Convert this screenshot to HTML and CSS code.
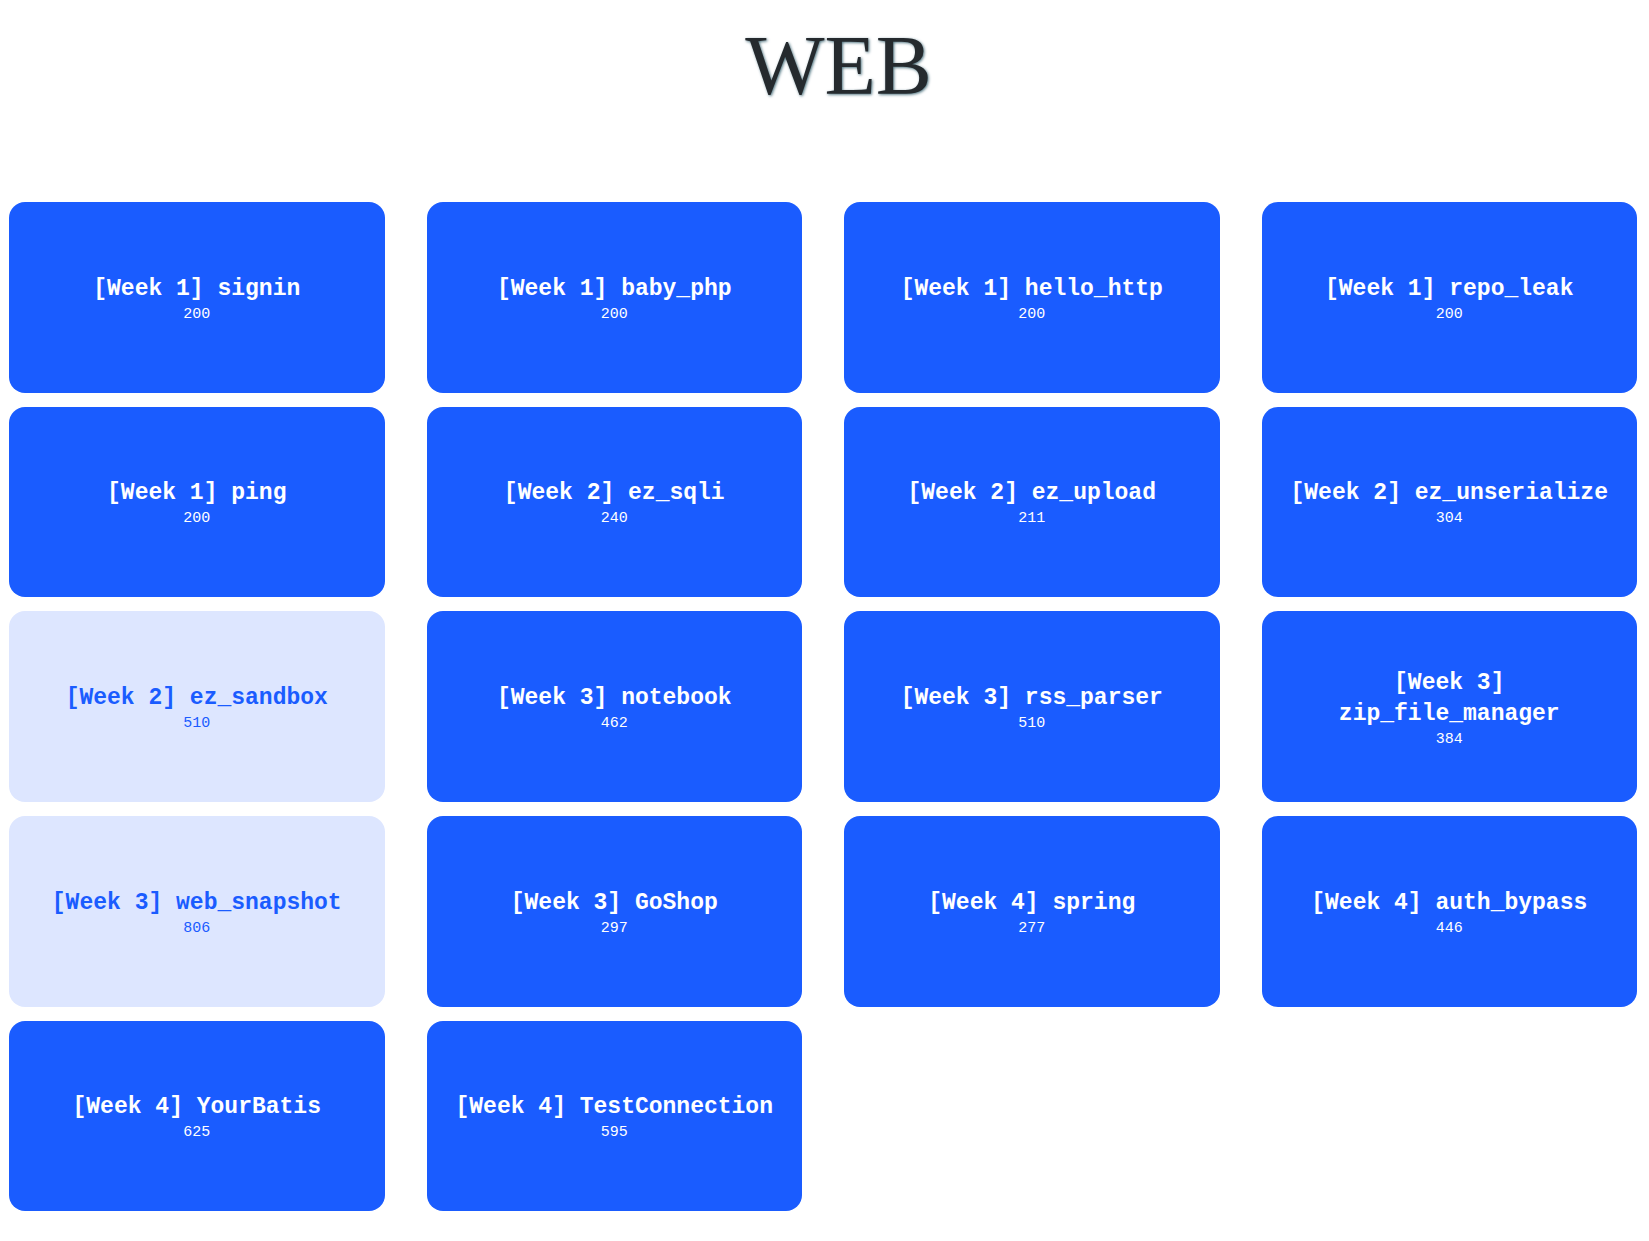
FILE: index.html
```
<!DOCTYPE html>
<html lang="en">
<head>
<meta charset="utf-8">
<meta name="viewport" content="width=device-width, initial-scale=1">
<title>WEB</title>
<link rel="stylesheet" href="styles.css">
</head>
<body>
<header class="category"><h1 class="category-title">WEB</h1></header>
<main class="challenges">
<button class="card" type="button"><span class="name">[Week 1] signin</span><span class="points">200</span></button>
<button class="card" type="button"><span class="name">[Week 1] baby_php</span><span class="points">200</span></button>
<button class="card" type="button"><span class="name">[Week 1] hello_http</span><span class="points">200</span></button>
<button class="card" type="button"><span class="name">[Week 1] repo_leak</span><span class="points">200</span></button>
<button class="card" type="button"><span class="name">[Week 1] ping</span><span class="points">200</span></button>
<button class="card" type="button"><span class="name">[Week 2] ez_sqli</span><span class="points">240</span></button>
<button class="card" type="button"><span class="name">[Week 2] ez_upload</span><span class="points">211</span></button>
<button class="card" type="button"><span class="name">[Week 2] ez_unserialize</span><span class="points">304</span></button>
<button class="card open" type="button"><span class="name">[Week 2] ez_sandbox</span><span class="points">510</span></button>
<button class="card" type="button"><span class="name">[Week 3] notebook</span><span class="points">462</span></button>
<button class="card" type="button"><span class="name">[Week 3] rss_parser</span><span class="points">510</span></button>
<button class="card" type="button"><span class="name">[Week 3] zip_file_manager</span><span class="points">384</span></button>
<button class="card open" type="button"><span class="name">[Week 3] web_snapshot</span><span class="points">806</span></button>
<button class="card" type="button"><span class="name">[Week 3] GoShop</span><span class="points">297</span></button>
<button class="card" type="button"><span class="name">[Week 4] spring</span><span class="points">277</span></button>
<button class="card" type="button"><span class="name">[Week 4] auth_bypass</span><span class="points">446</span></button>
<button class="card" type="button"><span class="name">[Week 4] YourBatis</span><span class="points">625</span></button>
<button class="card" type="button"><span class="name">[Week 4] TestConnection</span><span class="points">595</span></button>
</main>
</body>
</html>
```
FILE: styles.css
```
* {
  box-sizing: border-box;
}

body {
  margin: 0;
  background: #fff;
  color: #252a2e;
  font-family: NSimSun, "Liberation Mono", monospace;
}

.category {
  padding: 12px 0 82px 28px;
  text-align: center;
}

.category-title {
  margin: 0;
  font-family: NSimSun, "Liberation Serif", serif;
  font-size: 84px;
  font-weight: 400;
  line-height: 108px;
  text-shadow: 1px 1px 3px #4f7480;
}

.challenges {
  display: grid;
  grid-template-columns: repeat(4, minmax(0, 1fr));
  gap: 14px 42px;
  padding: 0 12px 30px 9px;
}

.card {
  display: flex;
  flex-direction: column;
  align-items: center;
  justify-content: center;
  aspect-ratio: 65 / 33;
  padding: 4px 18px 0;
  border: 0;
  border-radius: 16px;
  background: #1a5cff;
  color: #fff;
  font-family: inherit;
  text-align: center;
  cursor: pointer;
}

.open {
  background: #dde6ff;
  color: #1a5cff;
}

.name {
  font-size: 23px;
  font-weight: 700;
  line-height: 31px;
}

.points {
  font-size: 15px;
  line-height: 20px;
}
```
